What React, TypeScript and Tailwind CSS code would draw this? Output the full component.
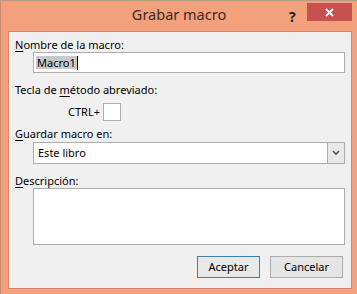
import React from "react";

function Label({ u, rest }: { u: string; rest: string }) {
  return (
    <div className="h-[14px] leading-[14px] pl-[6px] text-black">
      <span className="underline underline-offset-2">{u}</span>
      {rest}
    </div>
  );
}

export default function App() {
  return (
    <div
      className="w-[357px] h-[294px] bg-[#f3a07c] border-t border-t-[#b49c8c] border-l border-l-[#c98a6c] flex flex-col text-[11px]"
      style={{ fontFamily: '"Noto Sans", "Segoe UI", sans-serif' }}
    >
      {/* Title bar */}
      <div className="relative h-[30px] flex items-center justify-center">
        <span className="text-[14.5px] text-[#3a2a22] -mt-[2px]">Grabar macro</span>
        <span className="absolute left-[288px] top-[5px] text-[14px] font-bold text-[#222]">?</span>
        <div className="absolute left-[306px] top-[2px] w-[45px] h-[18px] bg-[#c75050] flex items-center justify-center">
          <svg width="9" height="9" viewBox="0 0 9 9">
            <path d="M1 1 L8 8 M8 1 L1 8" stroke="#fff" strokeWidth="1.8" />
          </svg>
        </div>
      </div>

      {/* Panel */}
      <div className="ml-[7px] w-[344px] h-[258px] bg-[#f0f0f0] border border-[#d4876a] flex flex-col">
        <div className="mt-[6px]">
          <Label u="N" rest="ombre de la macro:" />
        </div>
        <div className="ml-[24px] w-[312px] h-[21px] bg-white border border-[#abadb3] flex items-center pl-[2px]">
          <span className="bg-[#c8c8c8] px-[1px] leading-[13px]">Macro1</span>
          <span className="w-px h-[14px] bg-black" />
        </div>

        <div className="mt-[10px]">
          <div className="h-[14px] leading-[14px] pl-[6px] text-black">
            Tecla de <span className="underline underline-offset-2">m</span>étodo abreviado:
          </div>
        </div>
        <div className="mt-[6px] flex items-center">
          <span className="ml-[59px] w-[35px]">CTRL+</span>
          <div className="ml-[0px] w-[18px] h-[18px] bg-white border border-[#abadb3]" />
        </div>

        <div className="mt-[6px]">
          <Label u="G" rest="uardar macro en:" />
        </div>
        <div className="mt-[1px] ml-[24px] w-[312px] h-[22px] bg-white border border-[#acacac] flex items-center">
          <span className="pl-[4px] flex-1">Este libro</span>
          <div className="w-[17px] h-full bg-[#e8e8e8] border-l border-[#acacac] flex items-center justify-center">
            <svg width="8" height="6" viewBox="0 0 8 6">
              <path d="M1 1 L4 4 L7 1" stroke="#555" strokeWidth="1.6" fill="none" />
            </svg>
          </div>
        </div>

        <div className="mt-[10px]">
          <Label u="D" rest="escripción:" />
        </div>
        <div className="ml-[24px] w-[312px] h-[57px] bg-white border border-[#abadb3]" />

        <div className="mt-[11px] flex">
          <div className="ml-[188px] w-[63px] h-[22px] border border-[#3c7fb1] bg-[#e8e8e8] flex items-center justify-center">
            Aceptar
          </div>
          <div className="ml-[10px] w-[73px] h-[22px] border border-[#acacac] bg-[#e5e5e5] flex items-center justify-center">
            Cancelar
          </div>
        </div>
      </div>
    </div>
  );
}
